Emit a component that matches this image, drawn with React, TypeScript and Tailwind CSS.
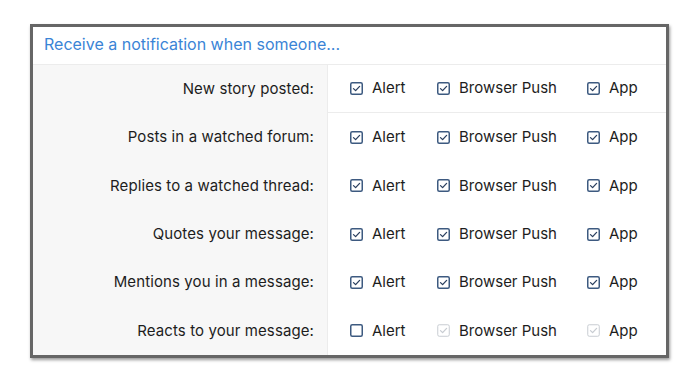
import React from "react";

type Row = { label: string; states: ("on" | "off" | "dis")[] };

const rows: Row[] = [
  { label: "New story posted:", states: ["on", "on", "on"] },
  { label: "Posts in a watched forum:", states: ["on", "on", "on"] },
  { label: "Replies to a watched thread:", states: ["on", "on", "on"] },
  { label: "Quotes your message:", states: ["on", "on", "on"] },
  { label: "Mentions you in a message:", states: ["on", "on", "on"] },
  { label: "Reacts to your message:", states: ["off", "dis", "dis"] },
];

function Box({ state }: { state: "on" | "off" | "dis" }) {
  const stroke = state === "dis" ? "#c8ccd2" : "#3d5a80";
  return (
    <svg width="13" height="13" viewBox="0 0 13 13" className="shrink-0">
      <rect x="0.75" y="0.75" width="11.5" height="11.5" rx="1.5" fill="white" stroke={stroke} strokeWidth={state === "dis" ? 1 : 1.5} />
      {state !== "off" && (
        <path d="M3.5 6.6 L5.6 8.6 L9.6 4.4" fill="none" stroke={state === "dis" ? "#c8ccd2" : "#2a3f5f"} strokeWidth="1.3" strokeLinecap="round" strokeLinejoin="round" />
      )}
    </svg>
  );
}

export default function App() {
  const labels = ["Alert", "Browser Push", "App"];
  return (
    <div className="w-[700px] h-[382px] bg-white pt-[24px] pl-[30px]" style={{ fontFamily: "Inter, 'Open Sans', sans-serif" }}>
      <div className="w-[639px] h-[334px] border-[3px] border-[#666666] shadow-[1px_2px_3px_rgba(0,0,0,0.4)] bg-white flex flex-col">
        <div className="h-[38px] flex items-center pl-[11px] pb-[4px] text-[16px] text-[#3a84d6] border-b border-[#ececec]">
          Receive a notification when someone...
        </div>
        <div className="flex-1 flex flex-col">
          {rows.map((r, i) => (
            <div key={i} className="flex flex-1">
              <div className="w-[294px] bg-[#f7f7f7] flex items-center justify-end pr-[13px] text-[15px] tracking-[0.1px] text-[#1d1d1d]">
                {r.label}
              </div>
              <div className={`flex-1 flex items-center pl-[22px] text-[15px] text-[#1d1d1d] border-l border-[#ececec] ${i === 0 ? "border-b" : ""}`}>
                <div className="flex items-center gap-[9px] w-[87px]">
                  <Box state={r.states[0]} />
                  <span>{labels[0]}</span>
                </div>
                <div className="flex items-center gap-[9px] w-[150px]">
                  <Box state={r.states[1]} />
                  <span>{labels[1]}</span>
                </div>
                <div className="flex items-center gap-[9px]">
                  <Box state={r.states[2]} />
                  <span>{labels[2]}</span>
                </div>
              </div>
            </div>
          ))}
        </div>
      </div>
    </div>
  );
}
